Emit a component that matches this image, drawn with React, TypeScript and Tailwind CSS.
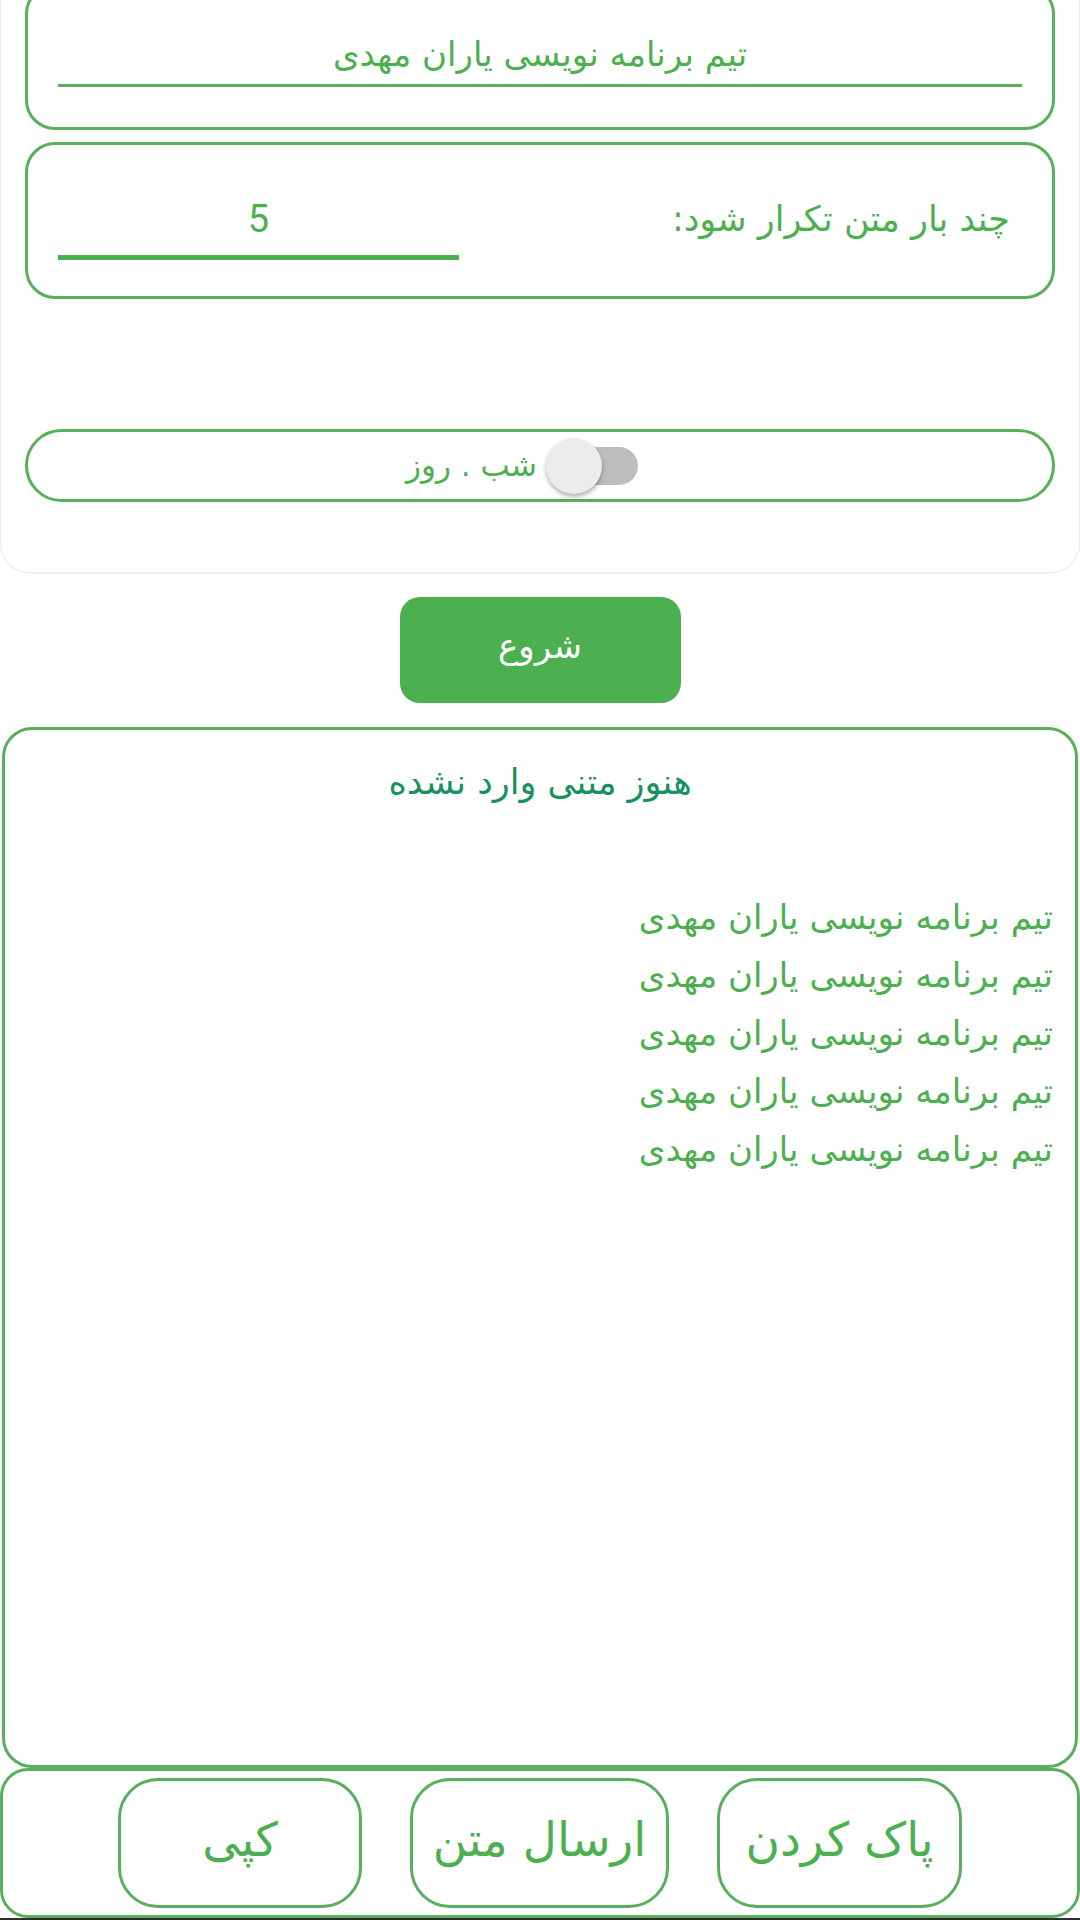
import React from 'react';

const font = { fontFamily: '"DejaVu Sans", "Noto Sans", sans-serif' };

const lines = Array.from({ length: 5 }, () => 'تیم برنامه نویسی یاران مهدی');

function DayNightSwitch() {
  return (
    <div className="relative h-[56px] w-[92px] shrink-0" aria-hidden="true">
      <div className="absolute right-0 top-[9px] h-[38px] w-[78px] rounded-full bg-[#bdbdbd]" />
      <div className="absolute left-0 top-0 h-[56px] w-[56px] rounded-full bg-[#ececec] shadow-[0_3px_4px_rgba(0,0,0,0.3)]" />
    </div>
  );
}

export default function App() {
  return (
    <div dir="rtl" className="flex h-[1920px] w-[1080px] flex-col overflow-hidden bg-white" style={font}>
      {/* Settings panel */}
      <div className="flex flex-col rounded-b-[30px] border border-t-0 border-[#ececec] bg-white px-[24px] pb-[70px] shadow-[0_1px_2px_rgba(0,0,0,0.06)]">
        {/* Text input card */}
        <div className="-mt-[16px] flex h-[146px] flex-col rounded-[30px] border-[3px] border-[#5aaf5d] px-[30px] pt-[42px]">
          <div className="flex h-[58px] items-center justify-center border-b-[3px] border-[#5aaf5d] pb-[6px] text-[34px] leading-none text-[#4caf50]">
            تیم برنامه نویسی یاران مهدی
          </div>
        </div>

        {/* Repeat count card */}
        <div className="mt-[12px] flex h-[157px] items-start justify-between rounded-[30px] border-[3px] border-[#5aaf5d] pl-[30px] pr-[42px] pt-[52px]">
          <span className="text-[35px] leading-[44px] text-[#4caf50]">چند بار متن تکرار شود:</span>
          <div className="flex h-[63px] w-[401px] items-start justify-center border-b-[5px] border-[#4caf50] pt-[2px] text-[38px] leading-[40px] text-[#4caf50]" style={{ fontFamily: 'Roboto, sans-serif' }}>
            5
          </div>
        </div>

        {/* Day / night row */}
        <div className="mt-[130px] flex h-[73px] items-center justify-center gap-[9px] rounded-full border-[3px] border-[#5aaf5d] pr-[36px]">
          <DayNightSwitch />
          <span className="text-[31px] leading-none text-[#4caf50]">شب . روز</span>
        </div>
      </div>

      {/* Start button */}
      <div className="mt-[24px] flex justify-center">
        <button type="button" className="flex h-[106px] w-[281px] items-center justify-center rounded-[20px] bg-[#4caf50] pb-[8px] text-[34px] text-white">
          شروع
        </button>
      </div>

      {/* Output card */}
      <div className="mx-[2px] mt-[24px] flex h-[1041px] flex-col rounded-[30px] border-[3px] border-[#5aaf5d]">
        <div className="mt-[32px] text-center text-[35px] leading-[40px] text-[#17915f]">هنوز متنی وارد نشده</div>
        <div className="mt-[86px] flex flex-col pr-[22px] text-[34px] leading-[58px] text-[#4caf50]">
          {lines.map((line, i) => (
            <div key={i}>{line}</div>
          ))}
        </div>
      </div>

      {/* Bottom actions */}
      <div className="flex h-[150px] items-center justify-center gap-[48px] rounded-[28px] border-[3px] border-[#5aaf5d]">
        <button type="button" className="flex h-[130px] w-[245px] items-center justify-center rounded-[40px] border-[3px] border-[#5aaf5d] pb-[6px] text-[47px] text-[#4caf50]">
          پاک کردن
        </button>
        <button type="button" className="flex h-[130px] w-[259px] items-center justify-center rounded-[40px] border-[3px] border-[#5aaf5d] pb-[6px] text-[47px] text-[#4caf50]">
          ارسال متن
        </button>
        <button type="button" className="flex h-[130px] w-[244px] items-center justify-center rounded-[40px] border-[3px] border-[#5aaf5d] pb-[6px] text-[47px] text-[#4caf50]">
          کپی
        </button>
      </div>
      <div className="h-[2px] bg-[#2e2e2e]" />
    </div>
  );
}
